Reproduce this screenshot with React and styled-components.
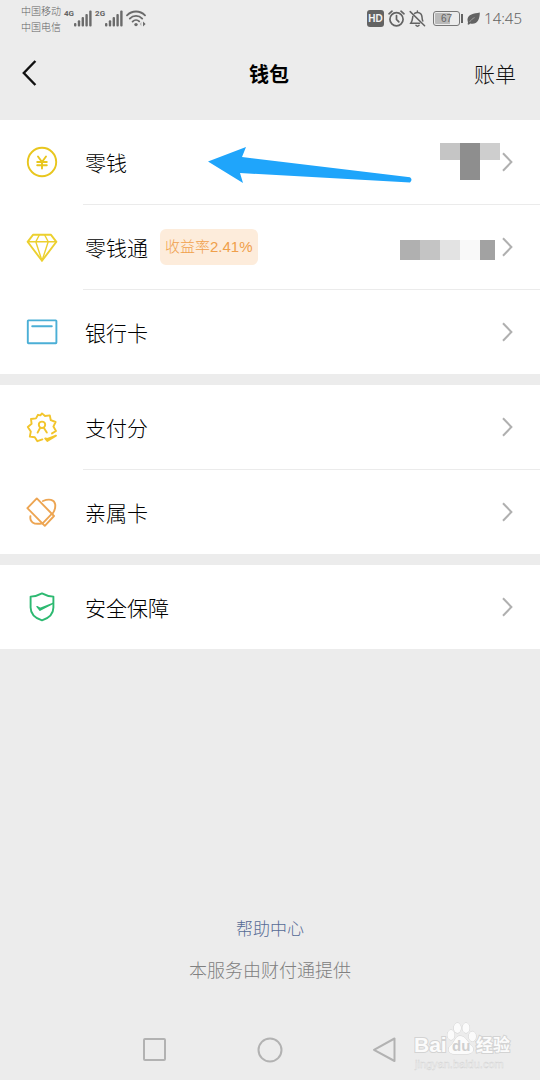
import styled, { createGlobalStyle } from "styled-components";

const GlobalStyle = createGlobalStyle`
  * {
    box-sizing: border-box;
  }
  body {
    margin: 0;
    background-color: #ececec;
    font-family: "Liberation Sans", "Noto Sans CJK SC", sans-serif;
    font-weight: 300;
    color: #000;
  }
`;

const Page = styled.div`
  position: relative;
  display: flex;
  flex-direction: column;
  min-height: 100vh;
`;

/* status bar */
const StatusBar = styled.div`
  display: flex;
  justify-content: space-between;
  align-items: center;
  height: 36px;
  padding: 0 18px 0 21px;
  color: #636363;
`;
const StatusGroup = styled.div`
  display: flex;
  align-items: center;
  gap: ${({ $gap }) => $gap}px;
`;
const Carriers = styled.div`
  padding-top: 3px;
  font-size: 10px;
  line-height: 16px;
`;
const Signal = styled.div`
  display: flex;
  align-items: flex-start;
`;
const NetworkType = styled.span`
  font-family: Roboto, sans-serif;
  font-size: 8px;
  font-weight: 700;
  line-height: 8px;
`;
const HdBadge = styled.span`
  width: 17px;
  border-radius: 3px;
  background-color: #636363;
  color: #f2f2f2;
  font-size: 10px;
  font-weight: 700;
  line-height: 17px;
  text-align: center;
`;
const Battery = styled.div`
  display: flex;
  align-items: center;
  margin-left: 3px;
`;
const BatteryCase = styled.span`
  width: 27px;
  border: 1px solid #777;
  border-radius: 3px;
  background: linear-gradient(to right, #bababa 67%, transparent 67%)
    content-box;
  padding: 1px;
  font-size: 10px;
  line-height: 11px;
  text-align: center;
`;
const BatteryCap = styled.span`
  width: 2px;
  height: 9px;
  margin-left: 1px;
  background-color: #636363;
`;
const Time = styled.span`
  font-family: "Noto Sans", sans-serif;
  font-size: 15px;
`;

/* title bar */
const Header = styled.header`
  display: grid;
  grid-template-columns: 1fr auto 1fr;
  align-items: center;
  height: 84px;
  padding: 0 24px 10px 22px;
`;
const BackButton = styled.button`
  display: flex;
  justify-self: start;
  padding: 0;
  border: 0;
  background: none;
  color: #111;
`;
const Title = styled.h1`
  margin: 0;
  font-size: 20px;
  font-weight: 700;
`;
const BillLink = styled.a`
  justify-self: end;
  color: #111;
  font-size: 21px;
  text-decoration: none;
`;

/* list */
const List = styled.main`
  display: flex;
  flex-direction: column;
  gap: 11px;
`;
const Group = styled.section`
  background-color: #fff;
`;
const Row = styled.a`
  position: relative;
  display: flex;
  align-items: center;
  padding-left: 26px;
  color: #000;
  text-decoration: none;
`;
const RowBody = styled.span`
  display: flex;
  flex: 1;
  align-items: center;
  height: 84px;
  margin-left: 25px;
  padding: 0 27px 0 2px;
`;
const Divider = styled.div`
  height: 1px;
  margin-left: 83px;
  background-color: #ebebeb;
`;
const Label = styled.span`
  font-size: 21px;
`;
const Rate = styled.span`
  margin-left: 12px;
  padding: 0 5px;
  border-radius: 6px;
  background-color: #fdecdb;
  color: #f0a04b;
  font-size: 15px;
  line-height: 36px;
`;
const Value = styled.span`
  display: flex;
  align-items: center;
  gap: 2px;
  margin-left: auto;
  color: #b0b0b0;
`;
const Pointer = styled.svg`
  position: absolute;
  top: 25px;
  left: 207px;
`;

/* footer */
const Footer = styled.footer`
  display: flex;
  flex-direction: column;
  align-items: center;
  gap: 17px;
  margin-top: auto;
  padding-bottom: 53px;
  line-height: 24px;
`;
const HelpLink = styled.a`
  color: #576b95;
  font-size: 17px;
  text-decoration: none;
`;
const Provider = styled.span`
  color: #808080;
  font-size: 18px;
`;
const NavBar = styled.nav`
  display: flex;
  justify-content: center;
  gap: 87px;
  padding-bottom: 16px;
`;
const NavButton = styled.button`
  display: flex;
  padding: 0;
  border: 0;
  background: none;
  color: #b2b2b2;
`;
const Watermark = styled.svg`
  position: absolute;
  right: 24px;
  bottom: 6px;
`;

const Icon = ({ color, children }) => (
  <svg
    width="32"
    height="32"
    viewBox="0 0 32 32"
    fill="none"
    stroke={color}
    strokeWidth="1.9"
    strokeLinejoin="round"
    strokeLinecap="round"
  >
    {children}
  </svg>
);

const CoinIcon = () => (
  <Icon color="#e8c61e">
    <circle cx="16" cy="16" r="14.2" />
    <path d="M12 10.5L16 16L20 10.5M16 16V22.5M11.2 16H20.8M11.2 19.3H20.8" />
  </Icon>
);

const DiamondIcon = () => (
  <Icon color="#ecd02e">
    <path d="M7 3.8H25L30.4 10.8L16 29.8L1.6 10.8Z" />
    <path
      strokeWidth="1.4"
      d="M1.6 10.8H30.4M13.3 4L9.8 10.8L16 29.8L22.2 10.8L18.7 4"
    />
  </Icon>
);

const BankCardIcon = () => (
  <Icon color="#4bafd6">
    <rect x="1.8" y="4.4" width="28.6" height="22.8" rx="0.6" />
    <path d="M6.2 10.3H25.8" />
  </Icon>
);

const ScoreIcon = () => (
  <Icon color="#f2c52c">
    <path d="M16.4 28.4L11.4 30.2L8.8 26.2L3.8 25.6L4.8 20.6L1.8 16L5.6 12.8L5 8L10 7.4L12 3.8L14.4 4.4L16 2.4L19 5L23.8 4.4L24.8 9.2L29.6 11L27.4 15.6L30 20L26 22.4" />
    <path d="M19.2 27.4L21.3 30L30 24.6L21.5 28Z" />
    <circle cx="16" cy="13.8" r="3.2" />
    <path d="M14.2 16.8L11.6 21.6M17.8 16.8L20.8 21.6" />
  </Icon>
);

const FamilyCardIcon = () => (
  <Icon color="#eda552">
    <path d="M10.8 2.4L1.4 12.2L18.8 29.8L28 20Z" />
    <path d="M16.6 27.4L26 17.7" />
    <path d="M17 5C23 2.4 28.4 3.4 29.2 8.4C29.6 12 28.6 15 26.4 18" />
    <path d="M4.4 20.2C3.6 25.2 7 29.4 16.4 27.2" />
  </Icon>
);

const ShieldIcon = () => (
  <Icon color="#2db971">
    <path d="M16 2.4C12.5 4.4 8.6 5.4 4.6 5.6V16.4C4.6 22.4 9 27 16 29.4C23 27 27.4 22.4 27.4 16.4V5.6C23.4 5.4 19.5 4.4 16 2.4Z" />
    <path
      d="M11 15.6L14.2 17.4L27 12.4L14 19.2Z"
      fill="#2db971"
      strokeWidth="1.4"
    />
  </Icon>
);

const Chevron = () => (
  <svg
    width="11"
    height="20"
    viewBox="0 0 11 20"
    fill="none"
    stroke="currentColor"
    strokeWidth="2"
  >
    <path d="M1 1.2L9.4 10L1 18.8" />
  </svg>
);

const BALANCE = [
  [40, 1, 20, 17, "#c5c5c5"],
  [60, 1, 20, 37, "#8e8e8e"],
  [80, 1, 20, 17, "#cecece"],
];
const FUND = [
  [0, 13, 20, 20, "#b0b0b0"],
  [20, 13, 20, 20, "#c4c4c4"],
  [40, 13, 20, 20, "#e3e3e3"],
  [60, 13, 20, 20, "#f9f9f9"],
  [80, 13, 15, 20, "#a2a2a2"],
];

const Mosaic = ({ blocks }) => (
  <svg width="100" height="40" viewBox="0 0 100 40" shapeRendering="crispEdges">
    {blocks.map(([x, y, w, h, fill]) => (
      <rect key={x} x={x} y={y} width={w} height={h} fill={fill} />
    ))}
  </svg>
);

const SignalBars = () => (
  <svg width="18" height="17" viewBox="0 0 18 17" fill="#6b6b6b">
    <rect x="0" y="13" width="2.4" height="3.4" rx="1" />
    <rect x="3.8" y="10.2" width="2.4" height="6.2" rx="1" />
    <rect x="7.6" y="7" width="2.4" height="9.4" rx="1" />
    <rect x="11.4" y="4" width="2.4" height="12.4" rx="1" />
    <rect x="15.2" y="0.4" width="2.4" height="16" rx="1" />
  </svg>
);

const WifiIcon = () => (
  <svg width="20" height="17" viewBox="0 0 20 17" fill="none" stroke="#6b6b6b">
    <path
      strokeWidth="1.8"
      strokeLinecap="round"
      d="M1 5.4C6 0.2 14 0.2 19 5.4M3.8 8.6C7.2 5 12.8 5 16.2 8.6M6.6 11.6C8.6 9.6 11.4 9.6 13.2 11.4"
    />
    <circle cx="10" cy="14.6" r="1.7" fill="#6b6b6b" stroke="none" />
    <path d="M17 11.6L19.6 14L17 16.4Z" fill="#6b6b6b" stroke="none" />
    <path d="M15.4 11.8L13.8 14L15.4 16.2Z" fill="#b5b5b5" stroke="none" />
  </svg>
);

const AlarmIcon = () => (
  <svg
    width="17"
    height="17"
    viewBox="0 0 17 17"
    fill="none"
    stroke="#636363"
    strokeWidth="1.7"
    strokeLinecap="round"
  >
    <circle cx="8.5" cy="9.2" r="6.6" />
    <path d="M8.5 5.6V9.4L10.8 11.8M1 3.8L4 1.2M16 3.8L13 1.2" />
  </svg>
);

const BellOffIcon = () => (
  <svg
    width="17"
    height="17"
    viewBox="0 0 17 17"
    fill="none"
    stroke="#636363"
    strokeWidth="1.5"
    strokeLinecap="round"
  >
    <path d="M1.2 1.6L15.6 15.8M3.8 6.4C3.4 9 3.6 10.6 1.8 13.2H10.6M5.6 3.4C8.6 1.2 12.8 3 13 7C13.1 8.6 13.2 9.8 13.8 11M8.4 2.2V1M7 15.4C7.8 16.4 9.2 16.4 10 15.4" />
  </svg>
);

const LeafIcon = () => (
  <svg width="13" height="13" viewBox="0 0 13 13">
    <path
      d="M1 10.4C-1.6 2.6 6 1.6 12.8 0.4C12.8 8 9.6 13 3.2 11.4L1.8 12.8L0.6 12.2Z"
      fill="#636363"
    />
    <path
      d="M2.6 10C4.2 7.6 5.6 6.6 7.6 5.6"
      stroke="#c5c5c5"
      strokeWidth="0.6"
      fill="none"
    />
  </svg>
);

const GROUPS = [
  [
    { label: "零钱", icon: CoinIcon, blocks: BALANCE, pointed: true },
    { label: "零钱通", icon: DiamondIcon, blocks: FUND, rate: "收益率2.41%" },
    { label: "银行卡", icon: BankCardIcon },
  ],
  [
    { label: "支付分", icon: ScoreIcon },
    { label: "亲属卡", icon: FamilyCardIcon },
  ],
  [{ label: "安全保障", icon: ShieldIcon }],
];

function WalletRow({ label, icon: RowIcon, blocks, rate, pointed }) {
  return (
    <Row href="#">
      <RowIcon />
      <RowBody>
        <Label>{label}</Label>
        {rate && <Rate>{rate}</Rate>}
        <Value>
          {blocks && <Mosaic blocks={blocks} />}
          <Chevron />
        </Value>
      </RowBody>
      {pointed && (
        <Pointer width="206" height="40" viewBox="0 0 206 40">
          <path
            d="M1 16.5L39 2L35 12L203 32.2Q206 34.8 203 37.4L33 28L36 38Z"
            fill="#1fa5fb"
          />
        </Pointer>
      )}
    </Row>
  );
}

function App() {
  return (
    <Page>
      <GlobalStyle />
      <StatusBar>
        <StatusGroup $gap={3}>
          <Carriers>
            <div>中国移动</div>
            <div>中国电信</div>
          </Carriers>
          <Signal>
            <NetworkType>4G</NetworkType>
            <SignalBars />
          </Signal>
          <Signal>
            <NetworkType>2G</NetworkType>
            <SignalBars />
          </Signal>
          <WifiIcon />
        </StatusGroup>
        <StatusGroup $gap={4}>
          <HdBadge>HD</HdBadge>
          <AlarmIcon />
          <BellOffIcon />
          <Battery>
            <BatteryCase>67</BatteryCase>
            <BatteryCap />
          </Battery>
          <LeafIcon />
          <Time>14:45</Time>
        </StatusGroup>
      </StatusBar>
      <Header>
        <BackButton aria-label="返回">
          <svg
            width="15"
            height="26"
            viewBox="0 0 15 26"
            fill="none"
            stroke="currentColor"
            strokeWidth="2.4"
          >
            <path d="M13.4 1L1.8 13L13.4 25" />
          </svg>
        </BackButton>
        <Title>钱包</Title>
        <BillLink href="#">账单</BillLink>
      </Header>
      <List>
        {GROUPS.map((rows) => (
          <Group key={rows[0].label}>
            {rows.map((row, i) => (
              <div key={row.label}>
                {i > 0 && <Divider />}
                <WalletRow {...row} />
              </div>
            ))}
          </Group>
        ))}
      </List>
      <Footer>
        <HelpLink href="#">帮助中心</HelpLink>
        <Provider>本服务由财付通提供</Provider>
      </Footer>
      <NavBar>
        <NavButton aria-label="最近任务">
          <svg width="28" height="28" fill="none" stroke="currentColor">
            <rect x="3" y="3" width="21" height="21" rx="1" strokeWidth="2" />
          </svg>
        </NavButton>
        <NavButton aria-label="主屏幕">
          <svg width="28" height="28" fill="none" stroke="currentColor">
            <circle cx="14" cy="14" r="11.5" strokeWidth="2" />
          </svg>
        </NavButton>
        <NavButton aria-label="返回上一页">
          <svg width="28" height="28" fill="none" stroke="currentColor">
            <path
              d="M23.5 2.5V25L3 13.8Z"
              strokeWidth="2"
              strokeLinejoin="round"
            />
          </svg>
        </NavButton>
      </NavBar>
      <Watermark
        width="102"
        height="54"
        viewBox="0 0 102 54"
        fill="#fbfbfb"
        stroke="#d3d3d3"
      >
        <g paintOrder="stroke" fontWeight="700">
          <text x="0" y="32" fontSize="21" strokeWidth="2">
            Bai
          </text>
          <path d="M46 16C52 16 53 22 57 25C62 30 58 34 53 34H40C34 34 33 28 37 25C41 22 41 16 46 16Z" />
          <ellipse cx="37" cy="15" rx="3.6" ry="5" />
          <ellipse cx="43.4" cy="8" rx="3.6" ry="5" />
          <ellipse cx="52" cy="8" rx="3.6" ry="5" />
          <ellipse cx="58.4" cy="16.4" rx="3.6" ry="5" />
          <text x="38" y="31" fontSize="15" fill="#cfcfcf" stroke="none">
            du
          </text>
          <text x="62" y="31" fontSize="17" strokeWidth="2">
            经验
          </text>
        </g>
        <text x="1" y="48" fontSize="11" fill="#f6f6f6" strokeWidth="0.4">
          jingyan.baidu.com
        </text>
      </Watermark>
    </Page>
  );
}

export default App;
